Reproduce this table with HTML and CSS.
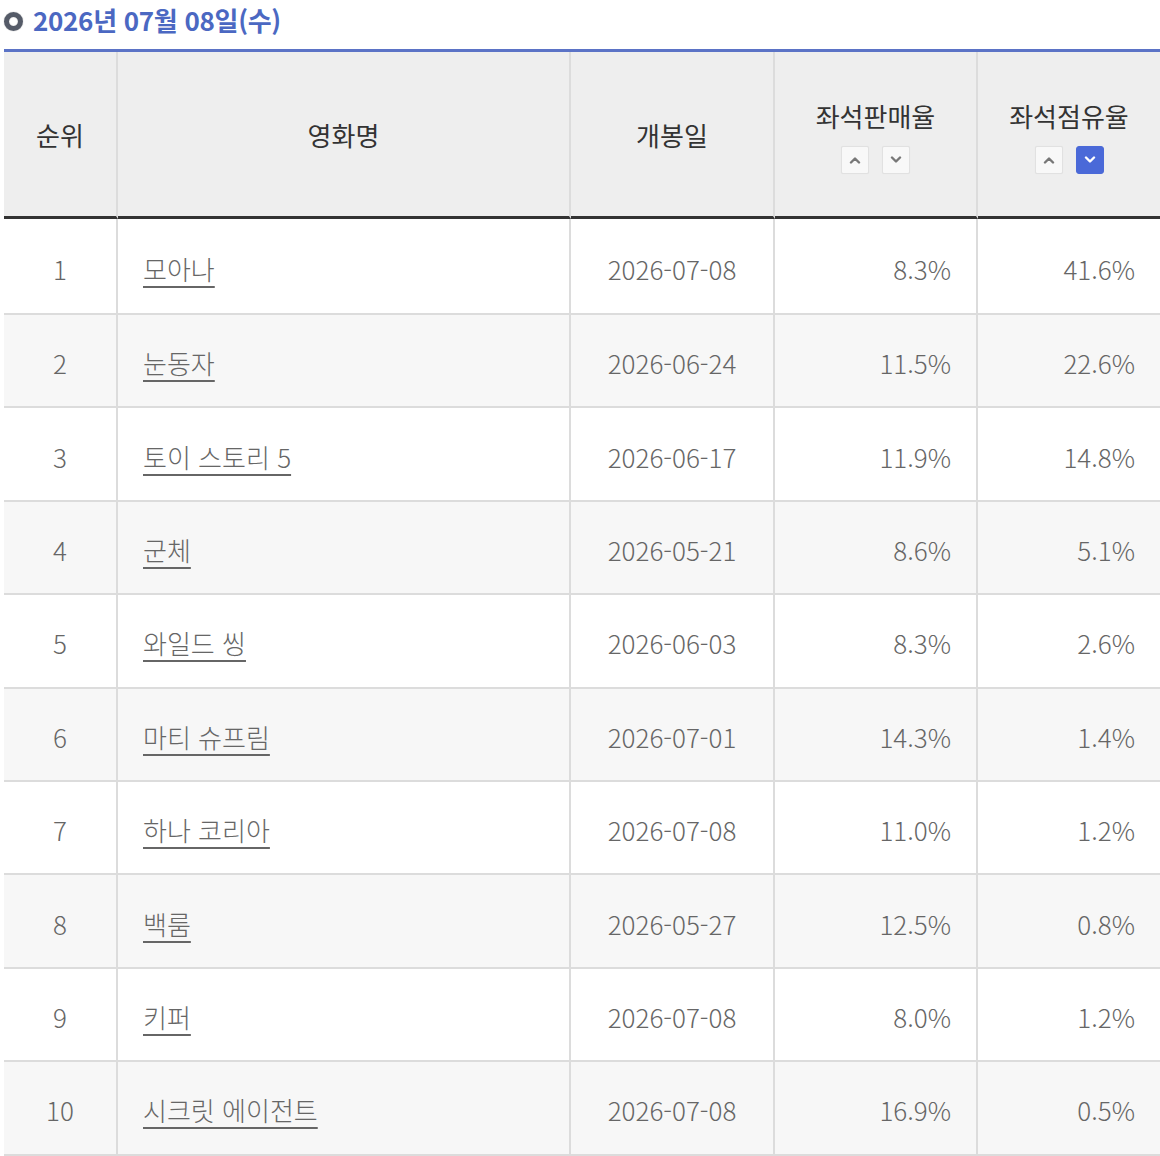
FILE: index.html
```html
<!DOCTYPE html>
<html lang="ko">
<head>
<meta charset="utf-8">
<title>좌석점유율</title>
<link rel="stylesheet" href="styles.css">
</head>
<body>
<div class="wrap">
  <h3 class="date-title"><span class="ring"></span>2026년 07월 08일(수)</h3>
  <table class="rank">
    <colgroup>
      <col class="c1"><col class="c2"><col class="c3"><col class="c4"><col class="c5">
    </colgroup>
    <thead>
      <tr>
        <th>순위</th>
        <th>영화명</th>
        <th>개봉일</th>
        <th><div class="th-sort"><span>좌석판매율</span><div class="sorts"><button class="sbtn"><svg viewBox="0 0 12 8" width="12" height="8"><path d="M2 6.5 L6 2.5 L10 6.5" /></svg></button><button class="sbtn"><svg viewBox="0 0 12 8" width="12" height="8"><path d="M2 1.5 L6 5.5 L10 1.5" /></svg></button></div></div></th>
        <th><div class="th-sort"><span>좌석점유율</span><div class="sorts"><button class="sbtn"><svg viewBox="0 0 12 8" width="12" height="8"><path d="M2 6.5 L6 2.5 L10 6.5" /></svg></button><button class="sbtn on"><svg viewBox="0 0 12 8" width="12" height="8"><path d="M2 1.5 L6 5.5 L10 1.5" /></svg></button></div></div></th>
      </tr>
    </thead>
    <tbody>
      <tr><td class="ctr">1</td><td class="tit"><a href="#">모아나</a></td><td class="ctr">2026-07-08</td><td class="num">8.3%</td><td class="num">41.6%</td></tr>
      <tr><td class="ctr">2</td><td class="tit"><a href="#">눈동자</a></td><td class="ctr">2026-06-24</td><td class="num">11.5%</td><td class="num">22.6%</td></tr>
      <tr><td class="ctr">3</td><td class="tit"><a href="#">토이 스토리 5</a></td><td class="ctr">2026-06-17</td><td class="num">11.9%</td><td class="num">14.8%</td></tr>
      <tr><td class="ctr">4</td><td class="tit"><a href="#">군체</a></td><td class="ctr">2026-05-21</td><td class="num">8.6%</td><td class="num">5.1%</td></tr>
      <tr><td class="ctr">5</td><td class="tit"><a href="#">와일드 씽</a></td><td class="ctr">2026-06-03</td><td class="num">8.3%</td><td class="num">2.6%</td></tr>
      <tr><td class="ctr">6</td><td class="tit"><a href="#">마티 슈프림</a></td><td class="ctr">2026-07-01</td><td class="num">14.3%</td><td class="num">1.4%</td></tr>
      <tr><td class="ctr">7</td><td class="tit"><a href="#">하나 코리아</a></td><td class="ctr">2026-07-08</td><td class="num">11.0%</td><td class="num">1.2%</td></tr>
      <tr><td class="ctr">8</td><td class="tit"><a href="#">백룸</a></td><td class="ctr">2026-05-27</td><td class="num">12.5%</td><td class="num">0.8%</td></tr>
      <tr><td class="ctr">9</td><td class="tit"><a href="#">키퍼</a></td><td class="ctr">2026-07-08</td><td class="num">8.0%</td><td class="num">1.2%</td></tr>
      <tr><td class="ctr">10</td><td class="tit"><a href="#">시크릿 에이전트</a></td><td class="ctr">2026-07-08</td><td class="num">16.9%</td><td class="num">0.5%</td></tr>
    </tbody>
  </table>
</div>
</body>
</html>
```
FILE: styles.css
```css
html, body {
  margin: 0;
  padding: 0;
  background: #fff;
}
body {
  font-family: "Noto Sans CJK KR", "Noto Sans", sans-serif;
  overflow: hidden;
}
.wrap {
  padding-left: 4px;
}
.date-title {
  margin: 0;
  height: 49px;
  display: flex;
  align-items: flex-start;
  gap: 10px;
  padding-top: 2px;
  box-sizing: border-box;
  font-size: 26px;
  font-weight: 700;
  line-height: 36px;
  color: #4b68c2;
  letter-spacing: -0.3px;
}
.ring {
  width: 19px;
  height: 19px;
  box-sizing: border-box;
  border-radius: 50%;
  border: 5px solid #555b68;
  box-shadow: 0 0 1px #888, inset 0 0 1px #888;
  margin-top: 10px;
  margin-left: 0;
  flex: none;
}
.rank {
  width: 1156px;
  border-collapse: separate;
  border-spacing: 0;
  table-layout: fixed;
  border-top: 3px solid #5b73c6;
}
.c1 { width: 114px; }
.c2 { width: 453px; }
.c3 { width: 204px; }
.c4 { width: 203px; }
.c5 { width: 182px; }
.rank th {
  height: 164px;
  padding: 0;
  background: #eeeeee;
  border-right: 2px solid #dcdcdc;
  border-bottom: 3px solid #333;
  font-size: 26px;
  font-weight: 400;
  color: #333;
  vertical-align: middle;
  text-align: center;
}
.rank th:last-child,
.rank td:last-child {
  border-right: 0;
}
.th-sort {
  display: flex;
  flex-direction: column;
  align-items: center;
  padding-top: 3px;
}
.th-sort span {
  line-height: 38px;
}
.sorts {
  display: flex;
  gap: 13px;
  margin-top: 11px;
}
.sbtn {
  width: 28px;
  height: 28px;
  padding: 0;
  margin: 0;
  border: 1px solid #e1e1e1;
  border-radius: 2px;
  background: #f8f8f8;
  box-shadow: 0 0 1px rgba(0,0,0,0.06);
  display: flex;
  align-items: center;
  justify-content: center;
}
.sbtn svg path {
  fill: none;
  stroke: #777;
  stroke-width: 2.4;
  stroke-linecap: round;
  stroke-linejoin: round;
}
.sbtn.on {
  background: #4a69d8;
  border-color: #4a69d8;
  border-radius: 3px;
}
.sbtn.on svg path {
  stroke: #fff;
}
.rank td {
  height: 93.4px;
  padding: 4px 0 0;
  box-sizing: border-box;
  border-right: 2px solid #dcdcdc;
  border-bottom: 2px solid #dcdcdc;
  font-size: 26px;
  font-weight: 300;
  color: #666;
  vertical-align: middle;
}
.rank tbody tr:first-child td {
  height: 96px;
}
.rank tbody tr:nth-child(even) td {
  background: #f7f7f7;
}
.rank td.ctr { text-align: center; }
.rank td.tit { padding-left: 25px; }
.rank td.num { text-align: right; padding-right: 25px; }
.rank td.tit a {
  color: #666;
  text-decoration: underline;
  text-decoration-thickness: 2px;
  text-underline-offset: 6px;
}
```
